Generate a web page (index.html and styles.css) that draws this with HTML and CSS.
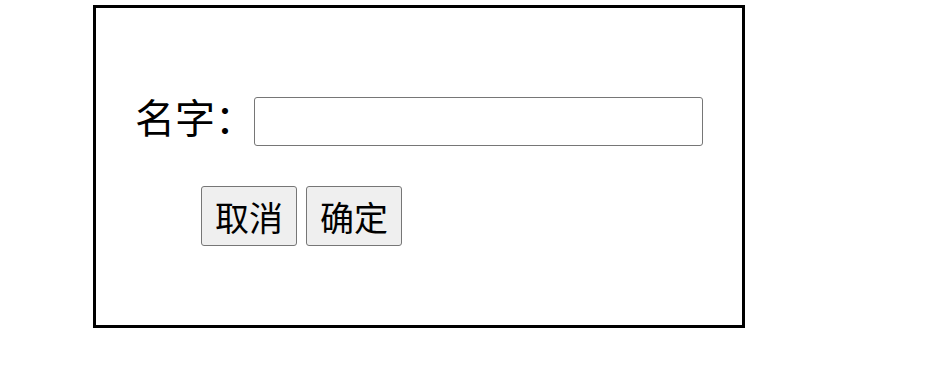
FILE: index.html
```html
<!DOCTYPE html>
<html lang="zh-CN">
<head>
  <meta charset="UTF-8">
  <title>名字</title>
  <link rel="stylesheet" href="styles.css">
</head>
<body>
  <div class="box">
    <div class="row">
      <label class="label" for="name">名字：</label>
      <input class="input" id="name" type="text">
    </div>
    <div class="btns">
      <button class="btn">取消</button>
      <button class="btn">确定</button>
    </div>
  </div>
</body>
</html>
```

FILE: styles.css
```css
* {
  margin: 0;
  padding: 0;
  box-sizing: border-box;
}

body {
  font-family: "Noto Sans CJK SC", "Noto Sans", sans-serif;
  color: #000;
  background: #fff;
}

.box {
  width: 652px;
  height: 323px;
  margin: 5px 0 0 93px;
  border: 3px solid #000;
  padding: 89px 0 0 39px;
}

.row {
  display: flex;
  align-items: center;
  height: 49px;
}

.label {
  font-size: 40px;
  line-height: 1;
  margin-top: -12px;
  width: 119px;
  flex-shrink: 0;
  white-space: nowrap;
}

.input {
  width: 449px;
  height: 49px;
  border: 1px solid #767676;
  border-radius: 3px;
  font-size: 24px;
  font-family: inherit;
  padding: 0 8px;
}

.btns {
  display: flex;
  gap: 9px;
  margin: 40px 0 0 66px;
}

.btn {
  width: 96px;
  height: 60px;
  font-size: 34px;
  font-family: inherit;
  color: #000;
  background: #efefef;
  border: 1px solid #767676;
  border-radius: 3px;
}
```
